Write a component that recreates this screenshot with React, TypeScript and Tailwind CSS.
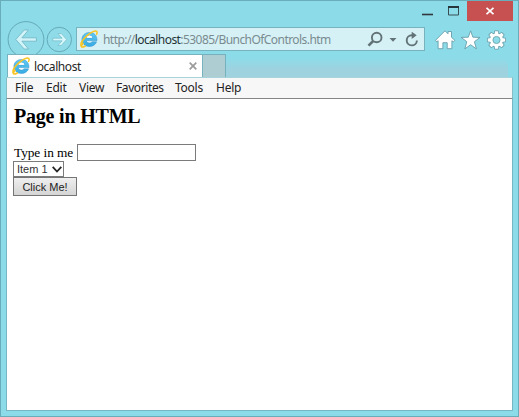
import React from "react";

function IeLogo({ className }: { className: string }) {
  return (
    <svg className={className} viewBox="0 0 18 18" fill="none">
      <defs>
        <linearGradient id="ieBlue" x1="0" y1="0" x2="0" y2="1">
          <stop offset="0" stopColor="#62c8f2" />
          <stop offset="1" stopColor="#35abe4" />
        </linearGradient>
      </defs>
      <path
        fillRule="evenodd"
        d="M17 10.600H6.300c.2 1.500 1.400 2.500 3.100 2.500 1.200 0 2.100-.5 2.600-1.300h4.600c-1 2.900-3.700 4.700-7.200 4.700-4.400 0-7.500-2.900-7.500-6.900 0-4.100 3.200-7.200 7.600-7.200 4.700 0 7.700 3.400 7.500 8.200ZM6.300 8h6.200c-.2-1.600-1.400-2.600-3.100-2.600S6.600 6.400 6.300 8Z"
        fill="url(#ieBlue)"
        stroke="#2e92ca"
        strokeWidth=".5"
      />
      <path d="M6.500 7.800c.4-1.400 1.400-2.200 2.900-2.200s2.700.8 2.900 2.200Z" fill="#fff" />
      <path
        d="M3 13.200C1.200 15.500 1 17 2.200 17.100c.8 0 2-.4 3.100-1.100M1.200 16.300c-1-2.300 1.300-6.500 5.300-10.200C10.600 2.300 15.200.200 16.600 1.300c.6.600.6 1.700 0 3.100"
        stroke="#f8c523"
        strokeWidth="1.500"
        strokeLinecap="round"
      />
    </svg>
  );
}

function TitleBar() {
  return (
    <div className="flex h-5 shrink-0 justify-end pr-[5px]">
      <svg className="h-5 w-[45px]" viewBox="0 0 45 20">
        <path d="M0 13.500h11" stroke="#30383b" strokeWidth="1.600" />
        <path d="M26.500 5.500h10v8.500h-10z" fill="none" stroke="#394e53" />
        <path d="M26 6h11" stroke="#26363a" strokeWidth="2" />
      </svg>
      <button className="flex h-5 w-[46px] items-center justify-center bg-[#c75050]" aria-label="Close">
        <svg className="mr-px size-2" viewBox="0 0 8 8" stroke="#fff" strokeWidth="1.800">
          <path d="m.5.800 7 6.400M7.500.800.5 7.200" />
        </svg>
      </button>
    </div>
  );
}

const gearTeeth = [0, 45, 90, 135, 180, 225, 270, 315];

function Gear() {
  return (
    <g transform="translate(495.500 40)">
      <g fill="#fff" stroke="#679eaa" strokeWidth="1.600" strokeLinejoin="round">
        {gearTeeth.map((angle) => (
          <path key={angle} d="M-1.500-8.700h3l.5 3.700h-4Z" transform={`rotate(${angle})`} />
        ))}
        <circle r="6.500" />
      </g>
      <g fill="#fff" stroke="none">
        {gearTeeth.map((angle) => (
          <path key={angle} d="M-1.500-8.700h3l.5 3.700h-4Z" transform={`rotate(${angle})`} />
        ))}
        <circle r="6.500" />
      </g>
      <circle r="3.600" fill="#8cdbe8" stroke="#679eaa" strokeWidth=".8" />
    </g>
  );
}

function NavBar() {
  return (
    <div className="flex h-[33px] shrink-0 items-start pl-[6px]">
      <svg className="h-[37px] w-[69px] shrink-0" viewBox="7 21 69 37" fill="none">
        <circle cx="26" cy="39.500" r="17.900" fill="#8fdce8" stroke="#65a9b7" />
        <path
          d="m15.800 39.500 8.400-9.500h4.300l-6.600 7.800h14.500v3.400H21.900l6.600 7.800h-4.300Z"
          fill="#d2f4f9"
          stroke="#6eb4c2"
          strokeWidth=".8"
          strokeLinejoin="round"
        />
        <circle cx="59.300" cy="39.500" r="12.200" fill="#8fdce8" stroke="#65a9b7" />
        <path
          d="m66.700 39.500-5.500-6h-3.200l4.100 4.700h-9.300v2.600h9.300l-4.100 4.700h3.200Z"
          fill="#d8f7fb"
          stroke="#6eb4c2"
          strokeWidth=".6"
          strokeLinejoin="round"
        />
      </svg>
      <div className="mt-[6px] flex h-6 w-[349px] shrink-0 items-center border border-[#77b3bf] bg-[#d6f1f6]">
        <IeLogo className="ml-[3px] size-[18px] shrink-0" />
        <div className="ml-[5px] w-[264px] pt-[2px] font-['Noto_Sans','Open_Sans',sans-serif] text-[12px] leading-5 tracking-[-0.560px] whitespace-nowrap text-[#798b8f]">
          http://<span className="text-[#253437]">localhost</span>:53085/BunchOfControls.htm
        </div>
        <svg className="h-[22px] w-[56px] shrink-0" viewBox="367 28 56 22" fill="none">
          <circle cx="376.700" cy="37.500" r="4.800" stroke="#627377" strokeWidth="1.900" />
          <path d="m373.200 41-4.700 4.700" stroke="#627377" strokeWidth="2.600" />
          <path d="M389.500 38h7l-3.500 3.800Z" fill="#627377" />
          <path d="M413.600 35.200h-1.800a5.100 5.100 0 1 0 5.100 5.300" stroke="#627377" strokeWidth="1.900" />
          <path d="m411.700 31.800 5 3.400-5 3.700Z" fill="#627377" />
        </svg>
      </div>
      <svg className="ml-[9px] mt-[7px] h-[22px] w-[76px] shrink-0" viewBox="433 28 76 22" stroke="#679eaa" strokeWidth=".9">
        <path
          d="m434.500 40.300 9.500-9.500 3 3v-2.300h3.500v5.800l3.400 3-1.600 1.600-1.400-1.200v8h-4.700v-6h-4.300v6h-4.800v-8l-1.300 1.200Z"
          fill="#fff"
          strokeLinejoin="round"
        />
        <path d="m469.600 30.800 2.300 6.400 7.100.2-5.600 4.300 2 7.200-5.800-4.200-5.800 4.200 2-7.200-5.600-4.300 7.100-.2Z" fill="#fff" />
        <Gear />
      </svg>
    </div>
  );
}

function TabBar() {
  return (
    <div className="relative flex h-[23px] shrink-0 bg-[#8cdbe8]">
      <div className="ml-[6px] flex w-[196px] items-center border border-b-0 border-[#77b3bf] bg-white pl-1">
        <IeLogo className="size-[18px] shrink-0" />
        <span className="ml-1 flex-1 pt-px font-['Noto_Sans','Open_Sans',sans-serif] text-[12px] leading-5 tracking-[-0.420px] text-[#252525]">
          localhost
        </span>
        <svg className="mr-[5px] size-2" viewBox="0 0 8 8" stroke="#9b9b9b" strokeWidth="1.700">
          <path d="m.7.700 6.600 6.600M7.300.700.700 7.300" />
        </svg>
      </div>
      <div className="w-[23px] border-t border-r border-[#75b2be] bg-[#adcdd3]" />
      <div className="mt-1 mr-[10px] flex-1 rounded-tr-lg bg-gradient-to-b from-[#8cdbe8] to-[#9ed2df] to-60%" />
    </div>
  );
}

function MenuBar() {
  return (
    <div className="mx-[5px] flex h-[22px] shrink-0 items-center border border-x-[#85bdc7] border-t-[#a9d3db] border-b-[#858585] bg-[#f7f7f7] pl-2 font-['Noto_Sans','Open_Sans',sans-serif] text-[12px] leading-5 tracking-[-0.250px] text-[#222]">
      <span className="w-[31px]">File</span>
      <span className="w-[33px]">Edit</span>
      <span className="w-[37px]">View</span>
      <span className="w-[59px] tracking-[-0.400px]">Favorites</span>
      <span className="w-[41px]">Tools</span>
      <span>Help</span>
    </div>
  );
}

function Page() {
  return (
    <main className="mx-[5px] mb-[5px] flex flex-1 flex-col items-start border border-t-0 border-[#76b7c3] bg-white pt-[6px] pl-[6px] font-['Liberation_Serif',serif] text-black">
      <h1 className="pl-px text-[20px] leading-[23px] font-bold tracking-[-0.200px]">Page in HTML</h1>
      <label className="mt-4 flex h-[17px] items-center text-[13.330px]">
        <span className="w-[64px] pl-px tracking-[-0.060px] whitespace-nowrap">Type in me</span>
        <input className="h-[17px] w-[119px] border border-[#7b7b7b] bg-white outline-none" />
      </label>
      <button className="flex h-4 w-[51px] items-center justify-start border border-[#7b7b7b] bg-white pl-[3px] text-left font-['Liberation_Sans',sans-serif] text-[11px] leading-4 whitespace-nowrap text-[#333]">
        <span className="w-[35px] shrink-0">Item 1</span>
        <svg className="h-[7px] w-[10px] shrink-0" viewBox="0 0 10 7" fill="none" stroke="#252525" strokeWidth="1.800">
          <path d="m.7.800 4.300 4.700L9.300.800" />
        </svg>
      </button>
      <button className="h-[19px] w-[64px] border border-[#757575] bg-gradient-to-b from-[#efefef] to-[#d5d5d5] pt-px font-['Liberation_Sans',sans-serif] text-[11px] leading-4 whitespace-nowrap text-[#222]">
        Click Me!
      </button>
    </main>
  );
}

export default function App() {
  return (
    <div className="flex h-[417px] w-[519px] flex-col overflow-hidden border border-[#69adba] bg-[#8cdbe8]">
      <TitleBar />
      <NavBar />
      <TabBar />
      <MenuBar />
      <Page />
    </div>
  );
}
